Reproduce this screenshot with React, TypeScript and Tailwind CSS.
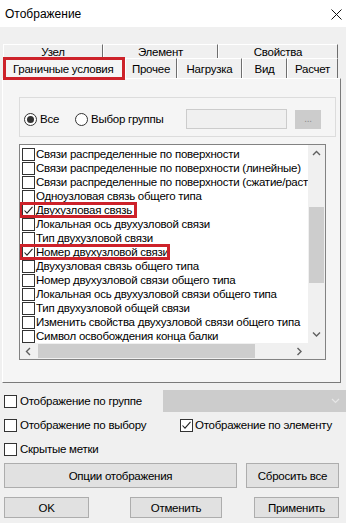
import React from 'react'

const items: { text: string; checked?: boolean; mark?: number }[] = [
  { text: 'Связи распределенные по поверхности' },
  { text: 'Связи распределенные по поверхности (линейные)' },
  { text: 'Связи распределенные по поверхности (сжатие/растяжение)' },
  { text: 'Одноузловая связь общего типа' },
  { text: 'Двухузловая связь', checked: true, mark: 118 },
  { text: 'Локальная ось двухузловой связи' },
  { text: 'Тип двухузловой связи' },
  { text: 'Номер двухузловой связи', checked: true, mark: 151 },
  { text: 'Двухузловая связь общего типа' },
  { text: 'Номер двухузловой связи общего типа' },
  { text: 'Локальная ось двухузловой связи общего типа' },
  { text: 'Тип двухузловой общей связи' },
  { text: 'Изменить свойства двухузловой связи общего типа' },
  { text: 'Символ освобождения конца балки' },
]

function Check() {
  return (
    <svg width="11" height="11" viewBox="0 0 11 11">
      <path d="M1.5 5.5 L4 8.2 L9.5 1.8" stroke="#222" strokeWidth="1.1" fill="none" />
    </svg>
  )
}

function Box({ checked }: { checked?: boolean }) {
  return (
    <span className="w-[13px] h-[13px] shrink-0 border border-[#333] bg-white flex items-center justify-center">
      {checked && <Check />}
    </span>
  )
}

function Radio({ on }: { on?: boolean }) {
  return (
    <span className="w-[13px] h-[13px] shrink-0 rounded-full border border-[#333] bg-white flex items-center justify-center">
      {on && <span className="w-[7px] h-[7px] rounded-full bg-[#333]" />}
    </span>
  )
}

function Arrow({ dir }: { dir: 'up' | 'down' | 'left' | 'right' }) {
  const d = {
    up: 'M1 5 L4.5 1.5 L8 5',
    down: 'M1 1.5 L4.5 5 L8 1.5',
    left: 'M5 1 L1.5 4.5 L5 8',
    right: 'M1.5 1 L5 4.5 L1.5 8',
  }[dir]
  const horiz = dir === 'left' || dir === 'right'
  return (
    <svg width={horiz ? 7 : 9} height={horiz ? 9 : 7} viewBox={horiz ? '0 0 7 9' : '0 0 9 7'}>
      <path d={d} stroke="#606060" strokeWidth="1.4" fill="none" />
    </svg>
  )
}

function Tab({ label, w }: { label: string; w: string }) {
  return (
    <div className={`${w} h-full flex items-center justify-center border-t border-l border-r border-t-white border-l-white border-r-[#6e6e6e]`}>
      {label}
    </div>
  )
}

function Btn({ label, w, h }: { label: string; w: string; h: string }) {
  return (
    <div className={`${w} ${h} flex items-center justify-center bg-[#e1e1e1] border border-[#adadad]`}>{label}</div>
  )
}

export default function App() {
  return (
    <div className="w-[346px] h-[523px] overflow-hidden whitespace-nowrap bg-[#f0f0f0] text-[11.5px] tracking-[-0.25px] leading-[14px] text-black font-['Liberation_Sans',Arial,sans-serif]">
      {/* title bar */}
      <div className="h-[27px] bg-white flex items-center justify-between pl-[5px] pr-[4px]">
        <span className="text-[12px] tracking-normal">Отображение</span>
        <svg width="11" height="11" viewBox="0 0 11 11" className="mt-[1px]">
          <path d="M0.5 0.5 L10.5 10.5 M10.5 0.5 L0.5 10.5" stroke="#111" strokeWidth="1" />
        </svg>
      </div>

      {/* tabs */}
      <div className="mt-[14px] ml-[3px] h-[17px] flex pt-[3px]">
        <Tab label="Узел" w="w-[100px]" />
        <Tab label="Элемент" w="w-[115px]" />
        <Tab label="Свойства" w="w-[120px]" />
      </div>
      <div className="ml-[3px] h-[20px] flex items-end">
        <div className="relative z-10 w-[122px] h-[23px] -mb-[2px] flex items-center pl-[7px] bg-[#f5f5f5] border-[3px] border-[#cd222a]">
          Граничные условия
        </div>
        <Tab label="Прочее" w="w-[52px]" />
        <Tab label="Нагрузка" w="w-[65px]" />
        <Tab label="Вид" w="w-[45px]" />
        <Tab label="Расчет" w="w-[51px]" />
      </div>

      {/* panel */}
      <div className="ml-[2px] w-[339px] h-[305px] bg-[#f5f5f5] border border-t-white border-l-white border-r-[#7a7a7a] border-b-[#7a7a7a]">
        {/* group box */}
        <div className="ml-[16px] mt-[18px] w-[317px] h-[40px] border border-[#dcdcdc] flex items-center pl-[4px] pt-[4px]">
          <Radio on />
          <span className="ml-[3px] w-[35px]">Все</span>
          <Radio />
          <span className="ml-[3px] w-[72px]">Выбор группы</span>
          <div className="ml-[23px] w-[101px] h-[20px] border border-[#cccccc] bg-[#f0f0f0]" />
          <div className="ml-[8px] w-[26px] h-[19px] bg-[#cccccc] flex items-center justify-center text-[10px] text-[#8c8c8c]">...</div>
        </div>

        {/* list */}
        <div className="ml-[16px] mt-[7px] w-[307px] h-[216px] border border-[#828282] bg-white flex flex-col">
          <div className="flex h-[198px]">
            <div className="w-[288px] overflow-hidden pt-[2px]">
              {items.map((it) => (
                <div key={it.text} className="relative h-[14px] flex items-center pl-[2px]">
                  <Box checked={it.checked} />
                  <span className="ml-[1px]">{it.text}</span>
                  {it.mark && (
                    <span
                      className="absolute left-[-1px] top-[-1px] h-[16px] border-[3px] border-[#cd222a]"
                      style={{ width: it.mark }}
                    />
                  )}
                </div>
              ))}
            </div>
            <div className="w-[17px] bg-[#f0f0f0] flex flex-col">
              <div className="h-[17px] flex items-center justify-center">
                <Arrow dir="up" />
              </div>
              <div className="h-[45px]" />
              <div className="mx-[1px] h-[76px] bg-[#cdcdcd]" />
              <div className="flex-1" />
              <div className="h-[17px] flex items-center justify-center">
                <Arrow dir="down" />
              </div>
            </div>
          </div>
          <div className="flex h-[16px] bg-[#f0f0f0]">
            <div className="w-[17px] flex items-center justify-center">
              <Arrow dir="left" />
            </div>
            <div className="ml-[1px] my-[1px] w-[217px] bg-[#cdcdcd]" />
            <div className="flex-1" />
            <div className="w-[17px] flex items-center justify-center">
              <Arrow dir="right" />
            </div>
            <div className="w-[17px]" />
          </div>
        </div>
      </div>

      {/* bottom options */}
      <div className="pl-[4px]">
        <div className="mt-[7px] h-[22px] flex items-center">
          <Box />
          <span className="ml-[3px]">Отображение по группе</span>
          <div className="ml-auto w-[183px] h-[22px] bg-[#cccccc] flex items-center justify-end pr-[6px]">
            <svg width="9" height="6" viewBox="0 0 9 6">
              <path d="M1 1 L4.5 4.5 L8 1" stroke="#e6e6e6" strokeWidth="1.2" fill="none" />
            </svg>
          </div>
        </div>
        <div className="mt-[4px] h-[18px] flex items-center">
          <div className="w-[176px] flex items-center">
            <Box />
            <span className="ml-[3px]">Отображение по выбору</span>
          </div>
          <Box checked />
          <span className="ml-[2px]">Отображение по элементу</span>
        </div>
        <div className="mt-[6px] h-[18px] flex items-center">
          <Box />
          <span className="ml-[3px]">Скрытые метки</span>
        </div>
        <div className="mt-[5px] flex gap-[9px]">
          <Btn label="Опции отображения" w="w-[233px]" h="h-[25px]" />
          <Btn label="Сбросить все" w="w-[93px]" h="h-[25px]" />
        </div>
        <div className="mt-[9px] flex">
          <Btn label="OK" w="w-[85px]" h="h-[21px]" />
          <div className="ml-[41px]">
            <Btn label="Отменить" w="w-[92px]" h="h-[21px]" />
          </div>
          <div className="ml-[32px]">
            <Btn label="Применить" w="w-[85px]" h="h-[21px]" />
          </div>
        </div>
      </div>
    </div>
  )
}
